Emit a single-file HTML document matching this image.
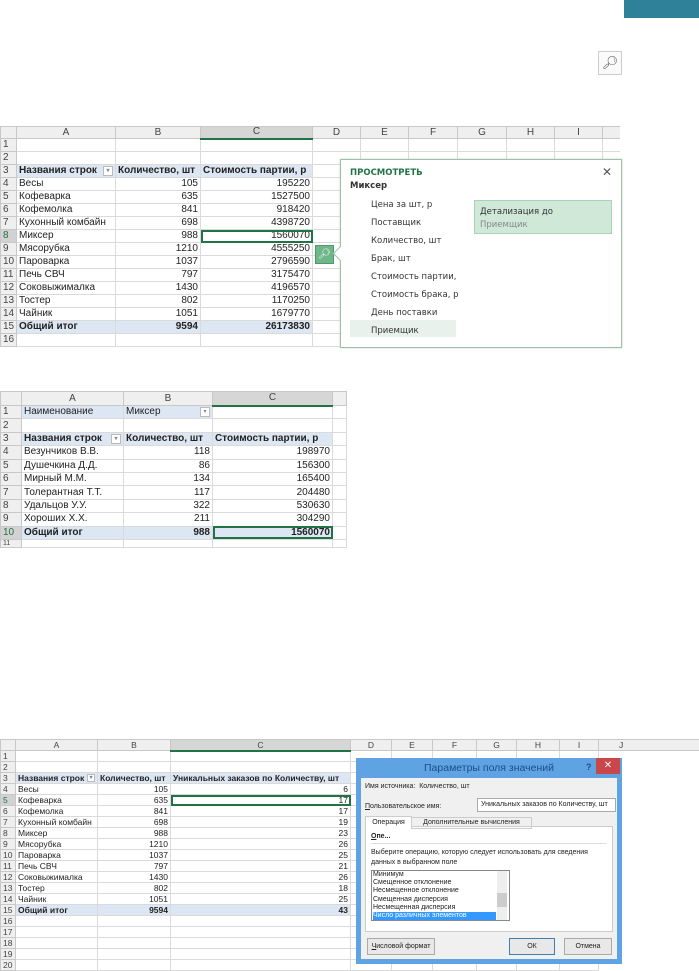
<!DOCTYPE html>
<html><head><meta charset="utf-8"><style>
body{margin:0;width:699px;height:970px;position:relative;background:#fff;font-family:"Liberation Sans",sans-serif;overflow:hidden}
.g{position:absolute;border-collapse:collapse;table-layout:fixed;font-size:10px;color:#222}
.g td{border:1px solid #dadada;padding:0 2px;white-space:nowrap;overflow:hidden;line-height:1}
.g td.r{text-align:right}
.g tr.h td{background:#efefef;color:#444;text-align:center;border-color:#c8c8c8}
.g tr.h td.s{background:#d6d6d6;border-bottom:2px solid #217346}
.g td.n{background:#efefef;color:#444;text-align:left;padding-left:2px;border-color:#c8c8c8}
.g td.ns{background:#d2d2d2;color:#217346}
.g tr.b td:not(.n){font-weight:bold;background:#dde7f3}
.g tr.t td:not(.n){font-weight:bold;background:#dde7f3;border-top:1px solid #9ab}
.sel{outline:2px solid #217346;outline-offset:-2px}
.dd{display:inline-block;width:8px;height:8px;border:1px solid #bbb;background:#fff;font-size:6px;color:#888;text-align:center;vertical-align:middle;line-height:8px;float:right}
.dl div{white-space:nowrap}
</style></head><body>
<div style="position:absolute;left:624px;top:0;width:75px;height:18px;background:#2e8199"></div>
<div style="position:absolute;left:598px;top:51px;width:22px;height:22px;border:1px solid #ccc;background:#fafafa;font-size:13px;color:#555;text-align:center;line-height:22px">&#x1F50E;&#xFE0E;</div>

<table class="g" style="left:0;top:126px;width:640px">
<colgroup><col style="width:16px"><col style="width:99px"><col style="width:85px"><col style="width:112px"><col style="width:48px"><col style="width:48px"><col style="width:49px"><col style="width:49px"><col style="width:48px"><col style="width:48px"><col style="width:38px"></colgroup>
<tr class="h" style="height:12px"><td></td><td>A</td><td>B</td><td class="s">C</td><td>D</td><td>E</td><td>F</td><td>G</td><td>H</td><td>I</td><td></td></tr>
<tr style="height:13px"><td class="n">1</td><td></td><td></td><td></td><td></td><td></td><td></td><td></td><td></td><td></td><td></td></tr>
<tr style="height:13px"><td class="n">2</td><td></td><td></td><td></td><td></td><td></td><td></td><td></td><td></td><td></td><td></td></tr>
<tr class="b" style="height:13px"><td class="n">3</td><td>Названия строк <span class="dd">▾</span></td><td>Количество, шт</td><td>Стоимость партии, р</td><td style="background:#fff"></td><td style="background:#fff"></td><td style="background:#fff"></td><td style="background:#fff"></td><td style="background:#fff"></td><td style="background:#fff"></td><td style="background:#fff"></td></tr>
<tr style="height:13px"><td class="n">4</td><td>Весы</td><td class="r">105</td><td class="r">195220</td><td></td><td></td><td></td><td></td><td></td><td></td><td></td></tr>
<tr style="height:13px"><td class="n">5</td><td>Кофеварка</td><td class="r">635</td><td class="r">1527500</td><td></td><td></td><td></td><td></td><td></td><td></td><td></td></tr>
<tr style="height:13px"><td class="n">6</td><td>Кофемолка</td><td class="r">841</td><td class="r">918420</td><td></td><td></td><td></td><td></td><td></td><td></td><td></td></tr>
<tr style="height:13px"><td class="n">7</td><td>Кухонный комбайн</td><td class="r">698</td><td class="r">4398720</td><td></td><td></td><td></td><td></td><td></td><td></td><td></td></tr>
<tr style="height:13px"><td class="n ns">8</td><td>Миксер</td><td class="r">988</td><td class="r sel">1560070</td><td></td><td></td><td></td><td></td><td></td><td></td><td></td></tr>
<tr style="height:13px"><td class="n">9</td><td>Мясорубка</td><td class="r">1210</td><td class="r">4555250</td><td></td><td></td><td></td><td></td><td></td><td></td><td></td></tr>
<tr style="height:13px"><td class="n">10</td><td>Пароварка</td><td class="r">1037</td><td class="r">2796590</td><td></td><td></td><td></td><td></td><td></td><td></td><td></td></tr>
<tr style="height:13px"><td class="n">11</td><td>Печь СВЧ</td><td class="r">797</td><td class="r">3175470</td><td></td><td></td><td></td><td></td><td></td><td></td><td></td></tr>
<tr style="height:13px"><td class="n">12</td><td>Соковыжималка</td><td class="r">1430</td><td class="r">4196570</td><td></td><td></td><td></td><td></td><td></td><td></td><td></td></tr>
<tr style="height:13px"><td class="n">13</td><td>Тостер</td><td class="r">802</td><td class="r">1170250</td><td></td><td></td><td></td><td></td><td></td><td></td><td></td></tr>
<tr style="height:13px"><td class="n">14</td><td>Чайник</td><td class="r">1051</td><td class="r">1679770</td><td></td><td></td><td></td><td></td><td></td><td></td><td></td></tr>
<tr class="t" style="height:13px"><td class="n">15</td><td>Общий итог</td><td class="r">9594</td><td class="r">26173830</td><td style="background:#fff;font-weight:normal"></td><td style="background:#fff"></td><td style="background:#fff"></td><td style="background:#fff"></td><td style="background:#fff"></td><td style="background:#fff"></td><td style="background:#fff"></td></tr>
<tr style="height:13px"><td class="n">16</td><td></td><td></td><td></td><td></td><td></td><td></td><td></td><td></td><td></td><td></td></tr>
</table>
<div style="position:absolute;left:620px;top:115px;width:79px;height:240px;background:#fff"></div>
<div style="position:absolute;left:315px;top:245px;width:17px;height:17px;background:#6fb68a;border:1px solid #4e9a6a;color:#fff;font-size:10px;text-align:center;line-height:17px">&#x1F50E;&#xFE0E;</div>
<div style="position:absolute;left:340px;top:159px;width:280px;height:187px;background:#fff;border:1px solid #9cc3a8;box-shadow:0 0 2px #ccc;font-family:'DejaVu Sans',sans-serif;font-size:8.5px;color:#333">
 <div style="position:absolute;left:-6px;top:88px;width:10px;height:10px;background:#fff;border-left:1px solid #9cc3a8;border-bottom:1px solid #9cc3a8;transform:rotate(45deg)"></div>
 <div style="position:absolute;left:9px;top:8px;color:#217346;font-weight:bold">ПРОСМОТРЕТЬ</div>
 <div style="position:absolute;right:9px;top:5px;font-size:12px;color:#555">✕</div>
 <div style="position:absolute;left:9px;top:21px;font-weight:bold">Миксер</div>
 <div style="position:absolute;left:30px;top:40px">Цена за шт, р</div>
 <div style="position:absolute;left:30px;top:58px">Поставщик</div>
 <div style="position:absolute;left:30px;top:76px">Количество, шт</div>
 <div style="position:absolute;left:30px;top:94px">Брак, шт</div>
 <div style="position:absolute;left:30px;top:112px">Стоимость партии,</div>
 <div style="position:absolute;left:30px;top:130px">Стоимость брака, р</div>
 <div style="position:absolute;left:30px;top:148px">День поставки</div>
 <div style="position:absolute;left:9px;top:160px;width:106px;height:17px;background:#e8f1ec"></div>
 <div style="position:absolute;left:30px;top:166px">Приемщик</div>
 <div style="position:absolute;left:133px;top:40px;width:136px;height:32px;background:#cfe8d8;border:1px solid #a8d3b6"></div>
 <div style="position:absolute;left:139px;top:47px">Детализация до</div>
 <div style="position:absolute;left:139px;top:60px;color:#888">Приемщик</div>
</div>

<table class="g" style="left:0;top:391px;width:346px">
<colgroup><col style="width:21px"><col style="width:102px"><col style="width:89px"><col style="width:120px"><col style="width:14px"></colgroup>
<tr class="h" style="height:14px"><td></td><td>A</td><td>B</td><td class="s">C</td><td></td></tr>
<tr style="height:13.4px"><td class="n">1</td><td style="background:#dde7f3">Наименование</td><td style="background:#dde7f3">Миксер <span class="dd">▾</span></td><td></td><td></td></tr>
<tr style="height:13.4px"><td class="n">2</td><td></td><td></td><td></td><td></td></tr>
<tr class="b" style="height:13.4px"><td class="n">3</td><td>Названия строк <span class="dd">▾</span></td><td>Количество, шт</td><td>Стоимость партии, р</td><td style="background:#fff"></td></tr>
<tr style="height:13.4px"><td class="n">4</td><td>Везунчиков В.В.</td><td class="r">118</td><td class="r">198970</td><td></td></tr>
<tr style="height:13.4px"><td class="n">5</td><td>Душечкина Д.Д.</td><td class="r">86</td><td class="r">156300</td><td></td></tr>
<tr style="height:13.4px"><td class="n">6</td><td>Мирный М.М.</td><td class="r">134</td><td class="r">165400</td><td></td></tr>
<tr style="height:13.4px"><td class="n">7</td><td>Толерантная Т.Т.</td><td class="r">117</td><td class="r">204480</td><td></td></tr>
<tr style="height:13.4px"><td class="n">8</td><td>Удальцов У.У.</td><td class="r">322</td><td class="r">530630</td><td></td></tr>
<tr style="height:13.4px"><td class="n">9</td><td>Хороших Х.Х.</td><td class="r">211</td><td class="r">304290</td><td></td></tr>
<tr class="t" style="height:13.4px"><td class="n ns">10</td><td>Общий итог</td><td class="r">988</td><td class="r sel">1560070</td><td style="background:#fff"></td></tr>
<tr style="height:6px"><td class="n" style="font-size:7px">11</td><td></td><td></td><td></td><td></td></tr>
</table>

<table class="g" style="left:0;top:739px;width:699px;font-size:8.5px">
<colgroup><col style="width:15px"><col style="width:82px"><col style="width:73px"><col style="width:180px"><col style="width:41px"><col style="width:41px"><col style="width:44px"><col style="width:40px"><col style="width:43px"><col style="width:39px"><col style="width:101px"></colgroup>
<tr class="h" style="height:11px"><td></td><td>A</td><td>B</td><td class="s">C</td><td>D</td><td>E</td><td>F</td><td>G</td><td>H</td><td>I</td><td style="text-align:left;padding-left:20px">J</td></tr>
<tr style="height:11px"><td class="n">1</td><td></td><td></td><td></td><td></td><td></td><td></td><td></td><td></td><td></td><td style="border:none"></td></tr>
<tr style="height:11px"><td class="n">2</td><td></td><td></td><td></td><td></td><td></td><td></td><td></td><td></td><td></td><td style="border:none"></td></tr>
<tr class="b" style="height:11px"><td class="n">3</td><td>Названия строк <span class="dd" style="width:6px;height:6px;line-height:6px">▾</span></td><td>Количество, шт</td><td>Уникальных заказов по Количеству, шт</td><td style="background:#fff"></td><td style="background:#fff"></td><td style="background:#fff"></td><td style="background:#fff"></td><td style="background:#fff"></td><td style="background:#fff"></td><td style="background:#fff;border:none"></td></tr>
<tr style="height:11px"><td class="n">4</td><td>Весы</td><td class="r">105</td><td class="r">6</td><td></td><td></td><td></td><td></td><td></td><td></td><td style="border:none"></td></tr>
<tr style="height:11px"><td class="n ns">5</td><td>Кофеварка</td><td class="r">635</td><td class="r sel">17</td><td></td><td></td><td></td><td></td><td></td><td></td><td style="border:none"></td></tr>
<tr style="height:11px"><td class="n">6</td><td>Кофемолка</td><td class="r">841</td><td class="r">17</td><td></td><td></td><td></td><td></td><td></td><td></td><td style="border:none"></td></tr>
<tr style="height:11px"><td class="n">7</td><td>Кухонный комбайн</td><td class="r">698</td><td class="r">19</td><td></td><td></td><td></td><td></td><td></td><td></td><td style="border:none"></td></tr>
<tr style="height:11px"><td class="n">8</td><td>Миксер</td><td class="r">988</td><td class="r">23</td><td></td><td></td><td></td><td></td><td></td><td></td><td style="border:none"></td></tr>
<tr style="height:11px"><td class="n">9</td><td>Мясорубка</td><td class="r">1210</td><td class="r">26</td><td></td><td></td><td></td><td></td><td></td><td></td><td style="border:none"></td></tr>
<tr style="height:11px"><td class="n">10</td><td>Пароварка</td><td class="r">1037</td><td class="r">25</td><td></td><td></td><td></td><td></td><td></td><td></td><td style="border:none"></td></tr>
<tr style="height:11px"><td class="n">11</td><td>Печь СВЧ</td><td class="r">797</td><td class="r">21</td><td></td><td></td><td></td><td></td><td></td><td></td><td style="border:none"></td></tr>
<tr style="height:11px"><td class="n">12</td><td>Соковыжималка</td><td class="r">1430</td><td class="r">26</td><td></td><td></td><td></td><td></td><td></td><td></td><td style="border:none"></td></tr>
<tr style="height:11px"><td class="n">13</td><td>Тостер</td><td class="r">802</td><td class="r">18</td><td></td><td></td><td></td><td></td><td></td><td></td><td style="border:none"></td></tr>
<tr style="height:11px"><td class="n">14</td><td>Чайник</td><td class="r">1051</td><td class="r">25</td><td></td><td></td><td></td><td></td><td></td><td></td><td style="border:none"></td></tr>
<tr class="t" style="height:11px"><td class="n">15</td><td>Общий итог</td><td class="r">9594</td><td class="r">43</td><td style="background:#fff"></td><td style="background:#fff"></td><td style="background:#fff"></td><td style="background:#fff"></td><td style="background:#fff"></td><td style="background:#fff"></td><td style="background:#fff;border:none"></td></tr>
<tr style="height:11px"><td class="n">16</td><td></td><td></td><td></td><td></td><td></td><td></td><td></td><td></td><td></td><td style="border:none"></td></tr>
<tr style="height:11px"><td class="n">17</td><td></td><td></td><td></td><td></td><td></td><td></td><td></td><td></td><td></td><td style="border:none"></td></tr>
<tr style="height:11px"><td class="n">18</td><td></td><td></td><td></td><td></td><td></td><td></td><td></td><td></td><td></td><td style="border:none"></td></tr>
<tr style="height:11px"><td class="n">19</td><td></td><td></td><td></td><td></td><td></td><td></td><td></td><td></td><td></td><td style="border:none"></td></tr>
<tr style="height:11px"><td class="n">20</td><td></td><td></td><td></td><td></td><td></td><td></td><td></td><td></td><td></td><td style="border:none"></td></tr>
</table>

<div class="dl" style="position:absolute;left:356px;top:758px;width:266px;height:206px;background:#5fa3e2;font-family:'Liberation Sans',sans-serif;font-size:7px;color:#222">
 <div style="position:absolute;left:0;top:0;width:266px;height:20px;text-align:center;line-height:20px;font-size:10.5px;color:#1b4f8a">Параметры поля значений</div>
 <div style="position:absolute;left:230px;top:4px;font-size:9px;color:#1b4f8a;font-weight:bold">?</div>
 <div style="position:absolute;left:240px;top:0;width:24px;height:16px;background:#c9464a;color:#fff;text-align:center;line-height:16px;font-size:10px">✕</div>
 <div style="position:absolute;left:5px;top:20px;width:256px;height:181px;background:#f0f0f0">
  <div style="position:absolute;left:4px;top:5px">Имя источника:&nbsp;&nbsp;Количество, шт</div>
  <div style="position:absolute;left:4px;top:25px"><u>П</u>ользовательское имя:</div>
  <div style="position:absolute;left:116px;top:20px;width:134px;height:12px;background:#fff;border:1px solid #aaa;line-height:12px;padding-left:3px;overflow:hidden">Уникальных заказов по Количеству, шт</div>
  <div style="position:absolute;left:4px;top:48px;width:246px;height:104px;background:#fff;border:1px solid #ccc"></div>
  <div style="position:absolute;left:4px;top:38px;width:45px;height:11px;background:#fff;border:1px solid #ccc;border-bottom:none;text-align:center;line-height:11px">Операция</div>
  <div style="position:absolute;left:50px;top:39px;width:119px;height:10px;border:1px solid #ccc;line-height:10px;text-align:center">Дополнительные вычисления</div>
  <div style="position:absolute;left:10px;top:55px;font-weight:bold"><u>О</u>пе...</div>
  <div style="position:absolute;left:10px;top:65px;width:236px;border-top:1px solid #ddd"></div>
  <div style="position:absolute;left:10px;top:70px;line-height:10px">Выберите операцию, которую следует использовать для сведения<br>данных в выбранном поле</div>
  <div style="position:absolute;left:10px;top:92px;width:136px;height:49px;border:1px solid #888;background:#fff;line-height:8.2px;padding-left:1px;overflow:hidden">Минимум<br>Смещенное отклонение<br>Несмещенное отклонение<br>Смещенная дисперсия<br>Несмещенная дисперсия<br><span style="background:#3399ff;color:#fff;display:inline-block;width:123px">Число различных элементов</span></div>
  <div style="position:absolute;left:136px;top:93px;width:10px;height:49px;background:#eee"><div style="margin-top:22px;height:14px;background:#ccc"></div></div>
  <div style="position:absolute;left:6px;top:160px;width:66px;height:15px;border:1px solid #aaa;background:#e8e8e8;text-align:center;line-height:15px"><u>Ч</u>исловой формат</div>
  <div style="position:absolute;left:148px;top:160px;width:44px;height:15px;border:1px solid #3c7fb1;background:#e8e8e8;text-align:center;line-height:15px">ОК</div>
  <div style="position:absolute;left:203px;top:160px;width:46px;height:15px;border:1px solid #aaa;background:#e8e8e8;text-align:center;line-height:15px">Отмена</div>
 </div>
</div>
</body></html>
